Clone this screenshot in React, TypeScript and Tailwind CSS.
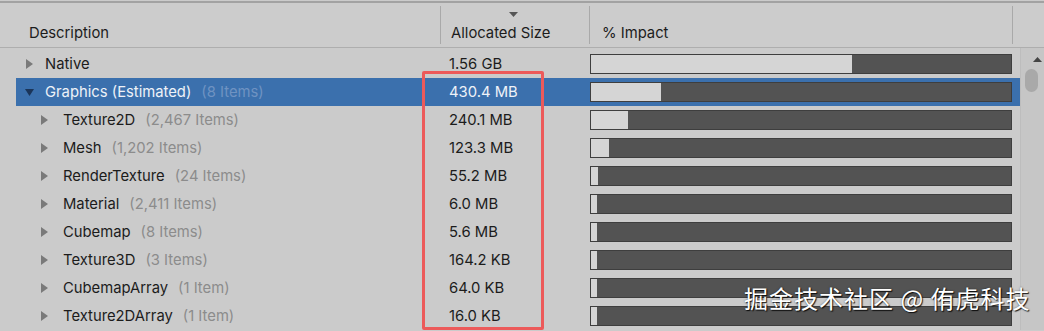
import React from "react";

type Row = { name: string; count?: string; size: string; fill: number; level: number; selected?: boolean };

const rows: Row[] = [
  { name: "Native", size: "1.56 GB", fill: 261, level: 0 },
  { name: "Graphics (Estimated)", count: "(8 Items)", size: "430.4 MB", fill: 70, level: 0, selected: true },
  { name: "Texture2D", count: "(2,467 Items)", size: "240.1 MB", fill: 37, level: 1 },
  { name: "Mesh", count: "(1,202 Items)", size: "123.3 MB", fill: 18, level: 1 },
  { name: "RenderTexture", count: "(24 Items)", size: "55.2 MB", fill: 7, level: 1 },
  { name: "Material", count: "(2,411 Items)", size: "6.0 MB", fill: 6, level: 1 },
  { name: "Cubemap", count: "(8 Items)", size: "5.6 MB", fill: 6, level: 1 },
  { name: "Texture3D", count: "(3 Items)", size: "164.2 KB", fill: 6, level: 1 },
  { name: "CubemapArray", count: "(1 Item)", size: "64.0 KB", fill: 6, level: 1 },
  { name: "Texture2DArray", count: "(1 Item)", size: "16.0 KB", fill: 6, level: 1 },
];

function Tri({ down, color }: { down?: boolean; color: string }) {
  return down ? (
    <svg width="9" height="9" viewBox="0 0 9 9"><path d="M0 1 L9 1 L4.5 8 Z" fill={color} /></svg>
  ) : (
    <svg width="9" height="10" viewBox="0 0 9 10"><path d="M1 0 L8 5 L1 10 Z" fill={color} /></svg>
  );
}

export default function App() {
  return (
    <div
      className="relative w-[1044px] h-[331px] overflow-hidden bg-[#cbcbcb] text-[14.8px] text-[#1c1c1c]"
      style={{ fontFamily: "Inter, 'Noto Sans', 'Noto Sans CJK SC', sans-serif" }}
    >
      <div className="border-t-2 border-[#a2a2a2] mt-px">
        {/* header */}
        <div className="flex h-[45px] border-b border-[#aeaeae] bg-[#cccccc]">
          <div className="w-[440px] flex items-end pb-[3px] pl-[29px]">Description</div>
          <div className="w-px my-[3px] bg-[#a9a9a9]" />
          <div className="w-[148px] relative flex items-end pb-[3px] pl-[10px]">
            <svg className="absolute left-[68px] top-[9px]" width="9" height="5" viewBox="0 0 9 5"><path d="M0 0 L9 0 L4.5 5 Z" fill="#555" /></svg>
            Allocated Size
          </div>
          <div className="w-px my-[3px] bg-[#a9a9a9]" />
          <div className="w-[422px] flex items-end pb-[3px] pl-[12px]">% Impact</div>
          <div className="w-px my-[3px] bg-[#a9a9a9]" />
          <div className="flex-1" />
        </div>
        {/* body */}
        <div className="flex">
          <div className="w-[1020px] pt-[2px]">
            {rows.map((r, i) => (
              <div
                key={i}
                className={`flex h-[28px] items-center ${r.selected ? "bg-[#3b70ad] ml-[16px]" : ""}`}
              >
                <div
                  className={`flex items-center ${r.selected ? "w-[424px] pl-[9px]" : r.level === 0 ? "w-[440px] pl-[25px]" : "w-[440px] pl-[40px]"}`}
                >
                  <span className={`${r.level === 0 ? "w-[20px]" : "w-[23px]"} flex`}>
                    <Tri down={r.selected} color={r.selected ? "#1b3559" : "#7a7a7a"} />
                  </span>
                  <span className={r.selected ? "text-[#eef2f8]" : ""}>{r.name}</span>
                  {r.count && (
                    <span className={`ml-[10px] ${r.selected ? "text-[#6f93c2]" : "text-[#8c8c8c]"}`}>{r.count}</span>
                  )}
                </div>
                <div className={`w-[150px] pl-[9px] ${r.selected ? "text-[#eef2f8]" : ""}`}>{r.size}</div>
                <div className="w-[422px] h-[20px] border border-[#3e3e3e] bg-[#535353] flex">
                  <div className="h-full bg-[#d5d5d5]" style={{ width: r.fill }} />
                </div>
              </div>
            ))}
          </div>
          {/* scrollbar */}
          <div className="flex-1 relative bg-[#c6c6c6] border-l border-[#bdbdbd]">
            <svg className="absolute left-[12px] top-[9px]" width="9" height="5" viewBox="0 0 9 5"><path d="M0 5 L4.5 0 L9 5 Z" fill="#444" /></svg>
            <div className="absolute left-[4px] top-[21px] w-[13px] h-[23px] rounded-full bg-[#a9a9a9]" />
          </div>
        </div>
      </div>

      {/* red highlight box */}
      <div className="absolute left-[422px] top-[71px] w-[122px] h-[259px] border-[3px] border-[#ec5a5a] rounded-[2px]" />

      {/* watermark */}
      <div
        className="absolute left-[744px] top-[282px] text-[24px] leading-[32px] text-white tracking-[1px]"
        style={{ textShadow: "1px 1px 1px rgba(0,0,0,0.85), 0 0 2px rgba(0,0,0,0.5)", fontFamily: "'Noto Sans CJK SC', sans-serif" }}
      >
        掘金技术社区 @ 侑虎科技
      </div>
    </div>
  );
}
